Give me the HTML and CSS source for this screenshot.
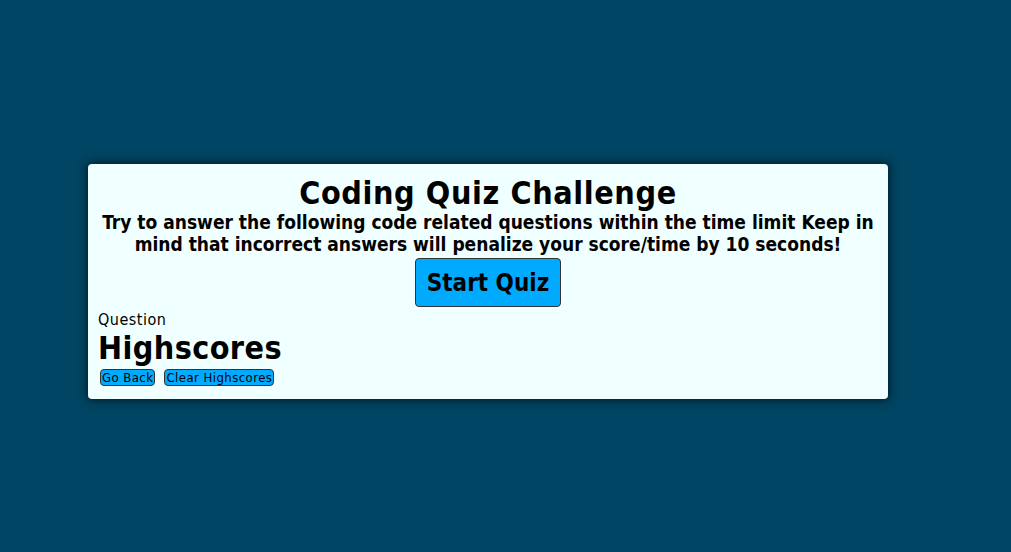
FILE: index.html
```html
<!DOCTYPE html>
<html>
<head>
<meta charset="utf-8">
<link rel="stylesheet" href="styles.css">
</head>
<body>
<main class="page">
  <section class="card">
    <h1 class="title">Coding Quiz Challenge</h1>
    <p class="intro">Try to answer the following code related questions within the time limit Keep in mind that incorrect answers will penalize your score/time by 10 seconds!</p>
    <div class="start-row"><button class="start-btn">Start Quiz</button></div>
    <div class="question">Question</div>
    <h2 class="hs-title">Highscores</h2>
    <div class="hs-actions">
      <button class="small-btn">Go Back</button>
      <button class="small-btn">Clear Highscores</button>
    </div>
  </section>
</main>
</body>
</html>
```
FILE: styles.css
```css
html, body {
  margin: 0;
  padding: 0;
  height: 100%;
}
body {
  background: #004563;
  font-family: "DejaVu Sans Condensed", "DejaVu Sans", sans-serif;
  color: #000;
}
.page {
  display: flex;
  padding: 164px 0 0 88px;
}
.card {
  width: 800px;
  box-sizing: border-box;
  background: #f0ffff;
  border-radius: 4px;
  box-shadow: 0 0 8px 2px rgba(0, 0, 0, 0.55);
  padding: 12px 10px 13px 10px;
}
.title {
  margin: 0;
  text-align: center;
  font-size: 32px;
  line-height: 35px;
  font-weight: bold;
  letter-spacing: 0.6px;
}
.intro {
  margin: 0;
  text-align: center;
  font-size: 19px;
  line-height: 22px;
  font-weight: bold;
}
.start-row {
  display: flex;
  justify-content: center;
  margin-top: 3px;
}
.start-btn {
  font-family: "DejaVu Sans Condensed", "DejaVu Sans", sans-serif;
  font-weight: bold;
  font-size: 24px;
  background: #00aaff;
  border: 1px solid #333;
  border-radius: 4px;
  color: #000;
  height: 49px;
  padding: 0 11px;
}
.question {
  font-size: 16px;
  line-height: 19px;
  margin-top: 3px;
  letter-spacing: 0.5px;
}
.hs-title {
  margin: 0;
  font-size: 32px;
  line-height: 38px;
  font-weight: bold;
  letter-spacing: 0.4px;
}
.hs-actions {
  display: flex;
  gap: 9px;
  padding-left: 2px;
  margin-top: 2px;
}
.small-btn {
  font-family: "DejaVu Sans Condensed", "DejaVu Sans", sans-serif;
  font-size: 13px;
  letter-spacing: 0.45px;
  background: #00aaff;
  border: 1px solid #333;
  border-radius: 4px;
  color: #000;
  padding: 0 1px;
  height: 17px;
  line-height: 15px;
}
```
